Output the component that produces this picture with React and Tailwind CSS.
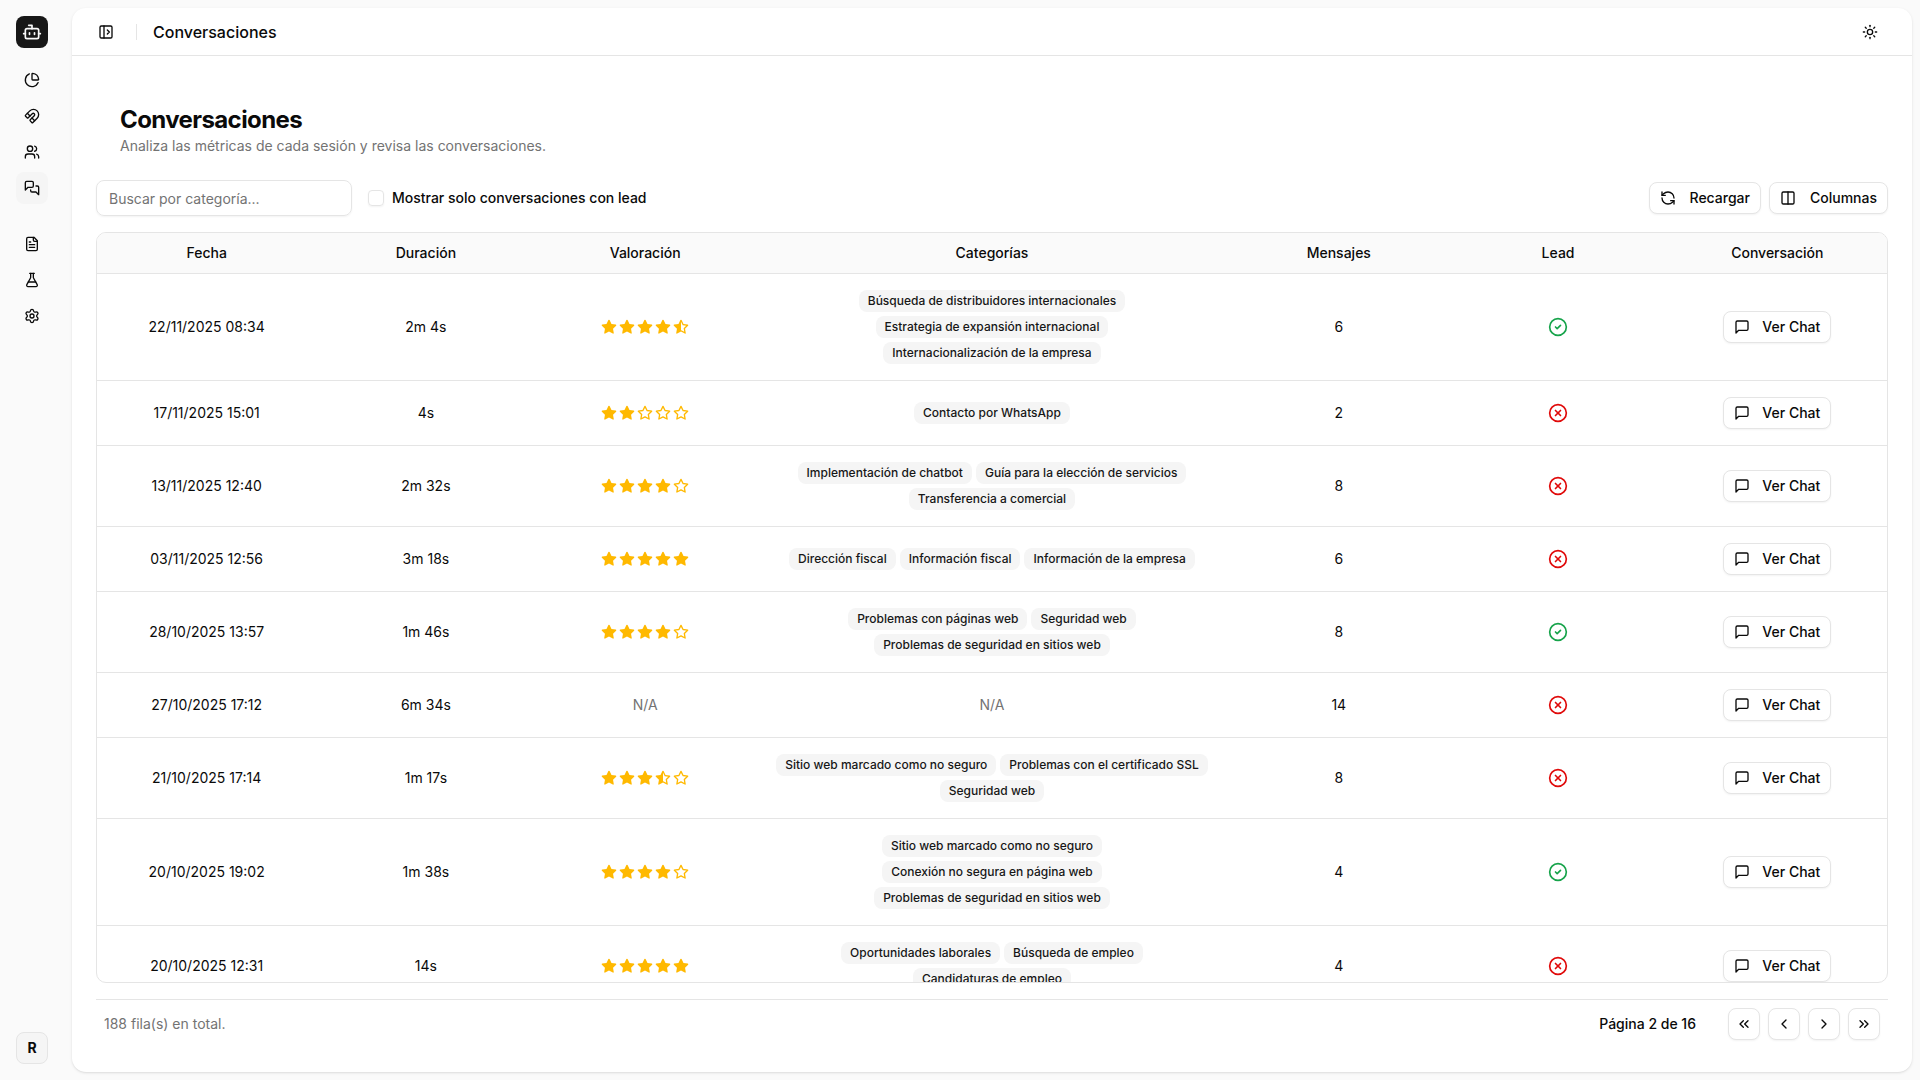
import { useState } from 'react';
import {
  Bot,
  ChartPie,
  ChevronLeft,
  ChevronRight,
  ChevronsLeft,
  ChevronsRight,
  CircleCheck,
  CircleX,
  Columns2,
  FlaskConical,
  Magnet,
  PanelLeftOpen,
  RefreshCcw,
  Settings,
  Sun,
  Users,
} from 'lucide-react';
import { TbStar, TbStarFilled, TbStarHalfFilled } from 'react-icons/tb';

const stroke = {
  viewBox: '0 0 24 24',
  fill: 'none',
  stroke: 'currentColor',
  strokeWidth: 2,
  strokeLinecap: 'round',
  strokeLinejoin: 'round',
};

function ChatIcon({ className }) {
  return (
    <svg {...stroke} className={className} aria-hidden="true">
      <path d="M21 15a2 2 0 0 1-2 2H7l-4 4V5a2 2 0 0 1 2-2h14a2 2 0 0 1 2 2z" />
    </svg>
  );
}

function ChatsIcon({ className }) {
  return (
    <svg {...stroke} className={className} aria-hidden="true">
      <path d="M14 9a2 2 0 0 1-2 2H6l-4 4V4a2 2 0 0 1 2-2h8a2 2 0 0 1 2 2z" />
      <path d="M18 9h2a2 2 0 0 1 2 2v11l-4-4h-6a2 2 0 0 1-2-2v-1" />
    </svg>
  );
}

function DocumentIcon({ className }) {
  return (
    <svg {...stroke} className={className} aria-hidden="true">
      <path d="M15 2H6a2 2 0 0 0-2 2v16a2 2 0 0 0 2 2h12a2 2 0 0 0 2-2V7Z" />
      <path d="M14 2v4a2 2 0 0 0 2 2h4" />
      <path d="M10 9H8" />
      <path d="M16 13H8" />
      <path d="M16 17H8" />
    </svg>
  );
}

const NAV = [
  [
    { label: 'Panel', icon: ChartPie },
    { label: 'Leads', icon: Magnet },
    { label: 'Usuarios', icon: Users },
    { label: 'Conversaciones', icon: ChatsIcon, active: true },
  ],
  [
    { label: 'Documentos', icon: DocumentIcon },
    { label: 'Pruebas', icon: FlaskConical },
    { label: 'Ajustes', icon: Settings },
  ],
];

const COLUMNS = [
  { label: 'Fecha', width: 'w-[12.25%]' },
  { label: 'Duración', width: 'w-[12.25%]' },
  { label: 'Valoración', width: 'w-[12.25%]' },
  { label: 'Categorías', width: 'w-[26.5%]' },
  { label: 'Mensajes', width: 'w-[12.25%]' },
  { label: 'Lead', width: 'w-[12.25%]' },
  { label: 'Conversación', width: 'w-[12.25%]' },
];

const ROWS = [
  {
    date: '22/11/2025 08:34',
    duration: '2m 4s',
    rating: 4.5,
    categories: [
      'Búsqueda de distribuidores internacionales',
      'Estrategia de expansión internacional',
      'Internacionalización de la empresa',
    ],
    messages: 6,
    lead: true,
  },
  { date: '17/11/2025 15:01', duration: '4s', rating: 2, categories: ['Contacto por WhatsApp'], messages: 2, lead: false },
  {
    date: '13/11/2025 12:40',
    duration: '2m 32s',
    rating: 4,
    categories: ['Implementación de chatbot', 'Guía para la elección de servicios', 'Transferencia a comercial'],
    messages: 8,
    lead: false,
  },
  {
    date: '03/11/2025 12:56',
    duration: '3m 18s',
    rating: 5,
    categories: ['Dirección fiscal', 'Información fiscal', 'Información de la empresa'],
    messages: 6,
    lead: false,
  },
  {
    date: '28/10/2025 13:57',
    duration: '1m 46s',
    rating: 4,
    categories: ['Problemas con páginas web', 'Seguridad web', 'Problemas de seguridad en sitios web'],
    messages: 8,
    lead: true,
  },
  { date: '27/10/2025 17:12', duration: '6m 34s', rating: null, categories: [], messages: 14, lead: false },
  {
    date: '21/10/2025 17:14',
    duration: '1m 17s',
    rating: 3.5,
    categories: ['Sitio web marcado como no seguro', 'Problemas con el certificado SSL', 'Seguridad web'],
    messages: 8,
    lead: false,
  },
  {
    date: '20/10/2025 19:02',
    duration: '1m 38s',
    rating: 4,
    categories: [
      'Sitio web marcado como no seguro',
      'Conexión no segura en página web',
      'Problemas de seguridad en sitios web',
    ],
    messages: 4,
    lead: true,
  },
  {
    date: '20/10/2025 12:31',
    duration: '14s',
    rating: 5,
    categories: ['Oportunidades laborales', 'Búsqueda de empleo', 'Candidaturas de empleo'],
    messages: 4,
    lead: false,
  },
];

const PAGER = [
  { label: 'Primera página', icon: ChevronsLeft },
  { label: 'Página anterior', icon: ChevronLeft },
  { label: 'Página siguiente', icon: ChevronRight },
  { label: 'Última página', icon: ChevronsRight },
];

function OutlineButton({ icon: Icon, gap = 'gap-3.5', children }) {
  return (
    <button
      type="button"
      className={`inline-flex h-8 items-center ${gap} rounded-lg border border-neutral-200 bg-white px-2.5 text-sm font-medium whitespace-nowrap shadow-xs hover:bg-neutral-100`}
    >
      <Icon className="size-4 shrink-0" />
      {children}
    </button>
  );
}

function Rating({ value }) {
  if (value === null) return <span className="text-neutral-500">N/A</span>;

  return (
    <div className="flex items-center justify-center gap-0.5 text-amber-400" role="img" aria-label={`${value} de 5`}>
      {[1, 2, 3, 4, 5].map((n) => {
        const Icon = value >= n ? TbStarFilled : value >= n - 0.5 ? TbStarHalfFilled : TbStar;
        return <Icon key={n} className="size-4" />;
      })}
    </div>
  );
}

function Categories({ items }) {
  if (items.length === 0) return <span className="text-neutral-500">N/A</span>;

  return (
    <div className="flex flex-wrap justify-center gap-1">
      {items.map((item) => (
        <span
          key={item}
          className="rounded-lg border border-transparent bg-neutral-100 px-2 py-0.5 text-xs font-medium whitespace-nowrap text-neutral-900"
        >
          {item}
        </span>
      ))}
    </div>
  );
}

function Sidebar() {
  return (
    <aside className="flex w-[72px] shrink-0 flex-col items-start p-4">
      <a href="#inicio" aria-label="Inicio" className="flex size-8 items-center justify-center rounded-lg bg-neutral-900 text-neutral-50">
        <Bot className="size-5" />
      </a>
      <nav className="mt-4 flex flex-col gap-6">
        {NAV.map((group, i) => (
          <div key={i} className="flex flex-col gap-1">
            {group.map(({ label, icon: Icon, active }) => (
              <a
                key={label}
                href="#"
                aria-label={label}
                className={`flex size-8 items-center justify-center rounded-lg hover:bg-neutral-100 ${active ? 'bg-neutral-100' : ''}`}
              >
                <Icon className="size-4" />
              </a>
            ))}
          </div>
        ))}
      </nav>
      <button
        type="button"
        className="mt-auto flex size-8 items-center justify-center rounded-lg border border-neutral-200 bg-neutral-100 text-sm font-bold"
      >
        R
      </button>
    </aside>
  );
}

function Header() {
  return (
    <header className="flex h-12 shrink-0 items-center border-b border-neutral-200 pr-6 pl-5">
      <button type="button" aria-label="Mostrar menú" className="flex size-7 items-center justify-center rounded-lg hover:bg-neutral-100">
        <PanelLeftOpen className="size-4" />
      </button>
      <div className="mx-4 h-4 w-px bg-neutral-200" />
      <h1 className="text-base font-medium">Conversaciones</h1>
      <button type="button" aria-label="Cambiar tema" className="ml-auto flex size-9 items-center justify-center rounded-lg hover:bg-neutral-100">
        <Sun className="size-4" />
      </button>
    </header>
  );
}

export default function App() {
  const [search, setSearch] = useState('');
  const [onlyLeads, setOnlyLeads] = useState(false);

  const rows = ROWS.filter(
    (row) =>
      (!onlyLeads || row.lead) &&
      (!search || row.categories.some((c) => c.toLowerCase().includes(search.toLowerCase())))
  );

  return (
    <div className="flex h-screen bg-neutral-50 font-['Inter',sans-serif] text-neutral-950 antialiased">
      <Sidebar />

      <main className="my-2 mr-2 flex min-w-0 flex-1 flex-col overflow-hidden rounded-[14px] bg-white shadow-sm">
        <Header />

        <div className="flex min-h-0 flex-1 flex-col p-6">
          <div className="p-6">
            <h2 className="text-2xl font-bold tracking-tight">Conversaciones</h2>
            <p className="text-sm text-neutral-500">Analiza las métricas de cada sesión y revisa las conversaciones.</p>
          </div>

          {/* Filters */}
          <div className="flex items-center gap-4">
            <input
              type="text"
              aria-label="Buscar por categoría"
              placeholder="Buscar por categoría..."
              value={search}
              onChange={(e) => setSearch(e.target.value)}
              className="h-9 w-64 rounded-lg border border-neutral-200 px-3 text-sm shadow-xs outline-none placeholder:text-neutral-500"
            />
            <label className="flex items-center gap-2 text-sm font-medium">
              <input
                type="checkbox"
                checked={onlyLeads}
                onChange={(e) => setOnlyLeads(e.target.checked)}
                className="size-4 appearance-none rounded border border-neutral-200 shadow-xs checked:bg-neutral-900"
              />
              Mostrar solo conversaciones con lead
            </label>
            <div className="ml-auto flex gap-2">
              <OutlineButton icon={RefreshCcw}>Recargar</OutlineButton>
              <OutlineButton icon={Columns2}>Columnas</OutlineButton>
            </div>
          </div>

          {/* Table */}
          <div className="mt-4 min-h-0 flex-1 overflow-auto rounded-[10px] border border-neutral-200 [scrollbar-width:none]">
            <table className="w-full table-fixed border-separate border-spacing-0 text-center text-sm">
              <thead className="sticky top-0">
                <tr>
                  {COLUMNS.map(({ label, width }) => (
                    <th key={label} scope="col" className={`h-[41px] border-b border-neutral-200 bg-neutral-50 px-2 font-medium ${width}`}>
                      {label}
                    </th>
                  ))}
                </tr>
              </thead>
              <tbody className="[&_td]:border-b [&_td]:border-neutral-200 [&_td]:p-4">
                {rows.map((row) => (
                  <tr key={row.date}>
                    <td>{row.date}</td>
                    <td>{row.duration}</td>
                    <td>
                      <Rating value={row.rating} />
                    </td>
                    <td>
                      <Categories items={row.categories} />
                    </td>
                    <td>{row.messages}</td>
                    <td>
                      {row.lead ? (
                        <CircleCheck aria-label="Sí" className="mx-auto size-5 text-[#16a34a]" />
                      ) : (
                        <CircleX aria-label="No" className="mx-auto size-5 text-[#e00a0a]" />
                      )}
                    </td>
                    <td>
                      <div className="flex justify-center">
                        <OutlineButton icon={ChatIcon} gap="gap-3">
                          Ver Chat
                        </OutlineButton>
                      </div>
                    </td>
                  </tr>
                ))}
              </tbody>
            </table>
          </div>

          {/* Pagination */}
          <div className="mt-4 flex items-center gap-8 border-t border-neutral-200 p-2">
            <p className="mr-auto text-sm text-neutral-500">188 fila(s) en total.</p>
            <p className="text-sm font-medium">Página 2 de 16</p>
            <div className="flex gap-2">
              {PAGER.map(({ label, icon: Icon }) => (
                <button
                  key={label}
                  type="button"
                  aria-label={label}
                  className="flex size-8 items-center justify-center rounded-lg border border-neutral-200 bg-white shadow-xs hover:bg-neutral-100"
                >
                  <Icon className="size-4" />
                </button>
              ))}
            </div>
          </div>
        </div>
      </main>
    </div>
  );
}
